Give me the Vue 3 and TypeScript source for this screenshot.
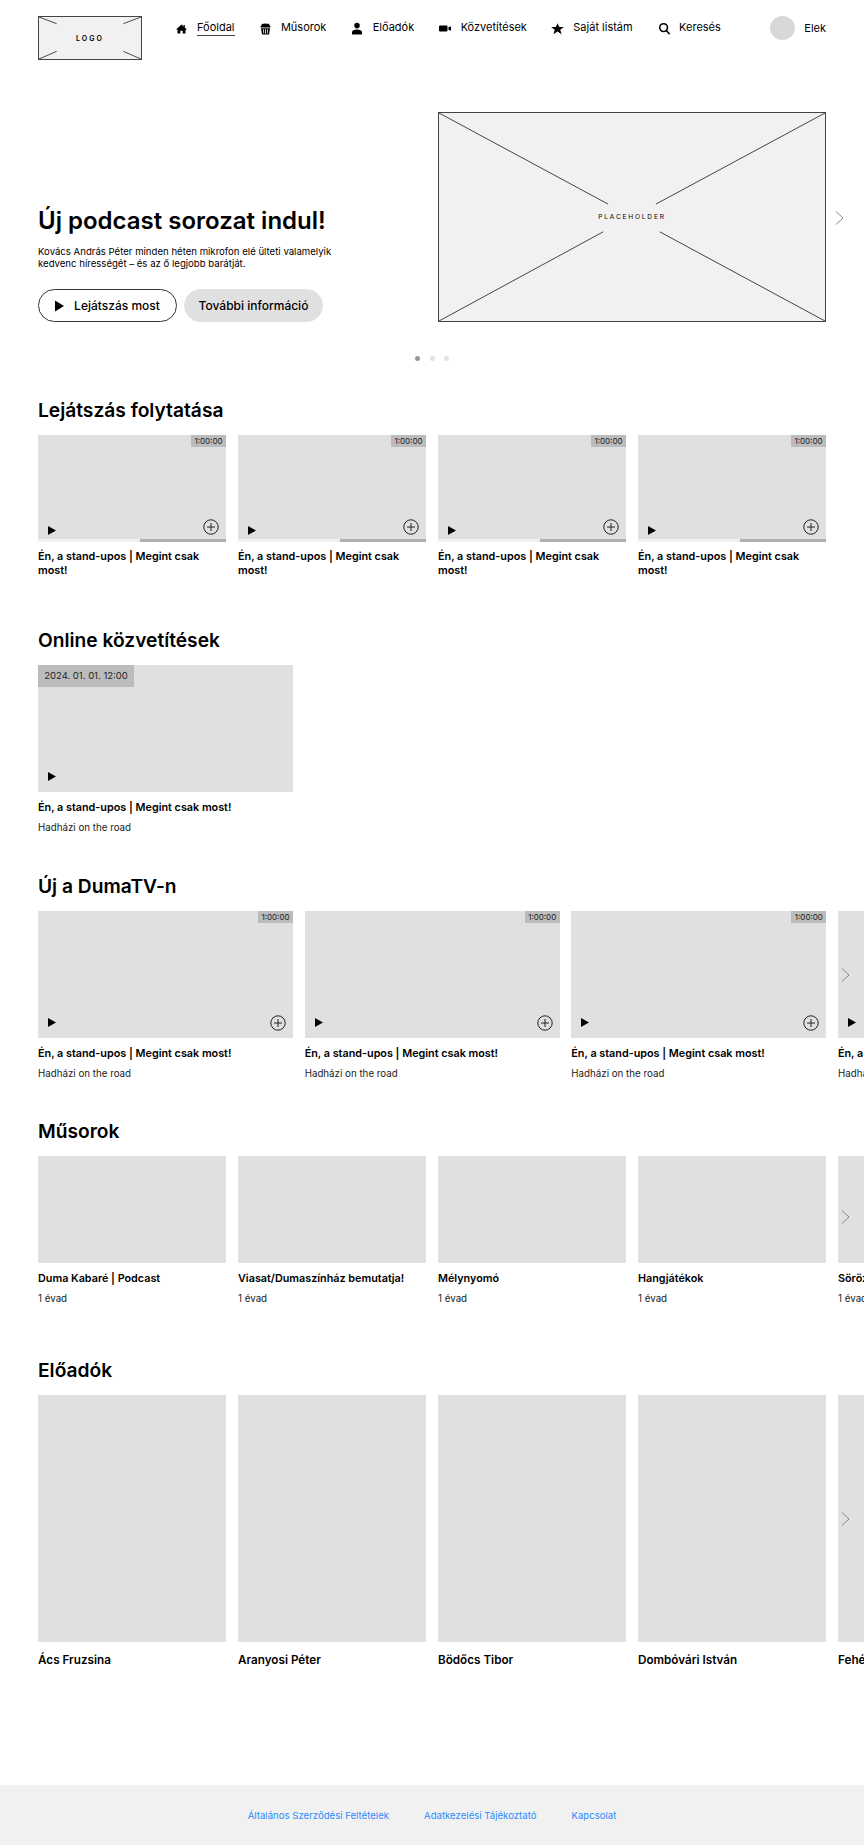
<script setup lang="ts">
interface Card {
  title: string
  sub?: string
}

const navItems = [
  { label: 'Főoldal', icon: 'home', active: true },
  { label: 'Műsorok', icon: 'popcorn' },
  { label: 'Előadók', icon: 'person' },
  { label: 'Közvetítések', icon: 'video' },
  { label: 'Saját listám', icon: 'star' },
  { label: 'Keresés', icon: 'search' }
]

const episodeTitle = 'Én, a stand-upos | Megint csak most!'
const showName = 'Hadházi on the road'

const continueCards: Card[] = [1, 2, 3, 4].map(() => ({ title: episodeTitle }))
const newCards: Card[] = [1, 2, 3, 4].map(() => ({ title: episodeTitle, sub: showName }))

const shows: Card[] = [
  { title: 'Duma Kabaré | Podcast', sub: '1 évad' },
  { title: 'Viasat/Dumaszínház bemutatja!', sub: '1 évad' },
  { title: 'Mélynyomó', sub: '1 évad' },
  { title: 'Hangjátékok', sub: '1 évad' },
  { title: 'Sörözés', sub: '1 évad' }
]

const artists = ['Ács Fruzsina', 'Aranyosi Péter', 'Bödőcs Tibor', 'Dombóvári István', 'Fehér Győző']
const footerLinks = ['Általános Szerződési Feltételek', 'Adatkezelési Tájékoztató', 'Kapcsolat']
</script>

<template>
  <div class="page">
    <header class="header">
      <div class="logo">
        <svg class="cross" viewBox="0 0 104 44" preserveAspectRatio="none">
          <path d="M0 0L18 7M104 0L86 7M0 44L18 36M104 44L86 36" />
        </svg>
        <span>LOGO</span>
      </div>
      <nav class="nav">
        <a v-for="item in navItems" :key="item.label" class="nav-item">
          <svg class="nav-icon" viewBox="0 0 14 14">
            <path v-if="item.icon === 'home'" d="M7.5 2.5L2 7.5H3.5V11.5H6.3V8.8H8.7V11.5H11.5V7.5H13L10.8 5.5V3H9.6V4.4Z" />
            <g v-else-if="item.icon === 'popcorn'">
              <path d="M3.6 3.2C3.4 2.2 4.4 1.5 5.4 1.9C6 1.2 9 1.2 9.6 1.9C10.6 1.5 11.6 2.2 11.4 3.2C12.4 3.6 12.8 4.6 12.4 5.4H2.6C2.2 4.6 2.6 3.6 3.6 3.2Z" />
              <path d="M3 6.2H12L11 12.5H4ZM5 7.2L5.5 11.6H6.2L5.8 7.2ZM7.1 7.2V11.6H7.9V7.2ZM9.2 7.2L8.8 11.6H9.5L10 7.2Z" fill-rule="evenodd" />
            </g>
            <path v-else-if="item.icon === 'person'" d="M7 .8A2.8 2.8 0 1 1 7 6.4A2.8 2.8 0 1 1 7 .8ZM2 12.5V10.2C2 8.4 4 7.4 7 7.4C10 7.4 12 8.4 12 10.2V12.5Z" />
            <path v-else-if="item.icon === 'video'" d="M2 3.5H8.5A1 1 0 0 1 9.5 4.5V8.5A1 1 0 0 1 8.5 9.5H2A1 1 0 0 1 1 8.5V4.5A1 1 0 0 1 2 3.5ZM10.4 5.3L13 4.3V8.7L10.4 7.7Z" />
            <path v-else-if="item.icon === 'star'" d="M7.5 1.2L9.2 5H13.9L10.2 7.7L11.6 12.2L7.5 9.5L3.4 12.2L4.8 7.7L1.1 5H5.8Z" />
            <g v-else class="stroked">
              <circle cx="7.6" cy="5.6" r="3.9" />
              <path d="M10.4 8.4L13.6 12.2" />
            </g>
          </svg>
          <span class="nav-label" :class="{ active: item.active }">{{ item.label }}</span>
        </a>
      </nav>
      <div class="user">
        <span class="avatar"></span>
        <span class="user-name">Elek</span>
      </div>
    </header>

    <section class="hero">
      <div class="hero-text">
        <h1>Új podcast sorozat indul!</h1>
        <p>Kovács András Péter minden héten mikrofon elé ülteti valamelyik kedvenc hírességét – és az ő legjobb barátját.</p>
        <div class="hero-buttons">
          <button class="btn btn-outline">
            <svg class="btn-play" viewBox="0 0 10 12"><path d="M0 0L10 6L0 12Z" /></svg>
            Lejátszás most
          </button>
          <button class="btn btn-grey">További információ</button>
        </div>
      </div>
      <div class="hero-image">
        <svg class="cross" viewBox="0 0 388 210" preserveAspectRatio="none">
          <path d="M0 0L170 92M388 0L218 92M0 210L165 120M388 210L222 120" />
        </svg>
        <span>PLACEHOLDER</span>
      </div>
      <svg class="arrow arrow-hero" viewBox="0 0 9 14"><path d="M1 .5L8 7L1 13.5" /></svg>
    </section>

    <div class="dots">
      <span class="dot on"></span>
      <span class="dot"></span>
      <span class="dot"></span>
    </div>

    <section class="section s-continue">
      <h2>Lejátszás folytatása</h2>
      <div class="row">
        <div v-for="(card, i) in continueCards" :key="i" class="card card-sm">
          <div class="thumb thumb-continue">
            <span class="duration">1:00:00</span>
            <svg class="play" viewBox="0 0 8 9"><path d="M0 0L8 4.5L0 9Z" /></svg>
            <svg class="plus" viewBox="0 0 16 16"><circle cx="8" cy="8" r="7.2" /><path d="M8 4V12M4 8H12" /></svg>
            <span class="progress"></span>
          </div>
          <div class="card-title">{{ card.title }}</div>
        </div>
      </div>
    </section>

    <section class="section s-online">
      <h2>Online közvetítések</h2>
      <div class="row">
        <div class="card card-lg">
          <div class="thumb thumb-lg">
            <span class="date">2024. 01. 01. 12:00</span>
            <svg class="play play-low" viewBox="0 0 8 9"><path d="M0 0L8 4.5L0 9Z" /></svg>
          </div>
          <div class="card-title">{{ episodeTitle }}</div>
          <div class="card-sub">{{ showName }}</div>
        </div>
      </div>
    </section>

    <section class="section s-new">
      <h2>Új a DumaTV-n</h2>
      <div class="row row-lg">
        <div v-for="(card, i) in newCards" :key="i" class="card card-lg">
          <div class="thumb thumb-lg">
            <span class="duration">1:00:00</span>
            <svg class="play play-low" viewBox="0 0 8 9"><path d="M0 0L8 4.5L0 9Z" /></svg>
            <svg class="plus" viewBox="0 0 16 16"><circle cx="8" cy="8" r="7.2" /><path d="M8 4V12M4 8H12" /></svg>
          </div>
          <div class="card-title">{{ card.title }}</div>
          <div class="card-sub">{{ card.sub }}</div>
        </div>
        <svg class="arrow arrow-new" viewBox="0 0 9 14"><path d="M1 .5L8 7L1 13.5" /></svg>
      </div>
    </section>

    <section class="section s-shows">
      <h2>Műsorok</h2>
      <div class="row">
        <div v-for="show in shows" :key="show.title" class="card card-sm">
          <div class="thumb thumb-show"></div>
          <div class="card-title">{{ show.title }}</div>
          <div class="card-sub">{{ show.sub }}</div>
        </div>
        <svg class="arrow arrow-shows" viewBox="0 0 9 14"><path d="M1 .5L8 7L1 13.5" /></svg>
      </div>
    </section>

    <section class="section s-artists">
      <h2>Előadók</h2>
      <div class="row">
        <div v-for="name in artists" :key="name" class="card card-sm">
          <div class="thumb thumb-artist"></div>
          <div class="card-title artist-name">{{ name }}</div>
        </div>
        <svg class="arrow arrow-artists" viewBox="0 0 9 14"><path d="M1 .5L8 7L1 13.5" /></svg>
      </div>
    </section>

    <footer class="footer">
      <a v-for="link in footerLinks" :key="link">{{ link }}</a>
    </footer>
  </div>
</template>

<style>
html,
body {
  margin: 0;
  background: #fff;
}
</style>

<style scoped>
.page {
  width: 864px;
  height: 1845px;
  overflow: hidden;
  font-family: Inter, "Liberation Sans", sans-serif;
  color: #000;
}

.header {
  display: flex;
  align-items: flex-start;
  height: 112px;
  box-sizing: border-box;
  padding: 16px 38px 0;
}

.logo {
  position: relative;
  flex: none;
  width: 104px;
  height: 44px;
  box-sizing: border-box;
  display: flex;
  align-items: center;
  justify-content: center;
  background: #f1f1f1;
  border: 1px solid #444;
  font-size: 7px;
  font-weight: 600;
  letter-spacing: 2px;
}

.cross {
  position: absolute;
  inset: 0;
  width: 100%;
  height: 100%;
  fill: none;
  stroke: #444;
  stroke-width: 1;
}

.logo span,
.hero-image span {
  position: relative;
}

.nav {
  display: flex;
  gap: 23.4px;
  margin: 4px 0 0 32px;
}

.nav-item {
  display: flex;
  align-items: flex-start;
  gap: 9px;
  font-size: 11px;
  line-height: 14px;
}

.nav-icon {
  width: 14px;
  height: 14px;
  margin-top: 1.5px;
  fill: #000;
}

.stroked {
  fill: none;
  stroke: #000;
  stroke-width: 1.6;
}

.nav-label {
  padding-bottom: 1px;
  border-bottom: 1px solid transparent;
}

.nav-label.active {
  border-bottom-color: #444;
}

.user {
  display: flex;
  align-items: center;
  gap: 9px;
  margin-left: auto;
  font-size: 11px;
}

.avatar {
  width: 25px;
  height: 24px;
  border-radius: 50%;
  background: #d8d8d8;
}

.hero {
  position: relative;
  display: flex;
  justify-content: space-between;
  align-items: flex-end;
  padding: 0 38px;
}

.hero-text {
  width: 340px;
}

.hero-text h1 {
  margin: 0 0 10px;
  font-size: 24px;
  font-weight: 600;
  line-height: 30px;
}

.hero-text p {
  width: 300px;
  margin: 0 0 19px;
  font-size: 9.6px;
  line-height: 12px;
}

.hero-buttons {
  display: flex;
  gap: 7px;
}

.btn {
  display: flex;
  align-items: center;
  justify-content: center;
  gap: 10px;
  height: 33px;
  width: 139px;
  padding: 0;
  box-sizing: border-box;
  border-radius: 17px;
  border: 1px solid #333;
  background: #fff;
  color: #000;
  font-family: inherit;
  font-size: 12px;
  font-weight: 500;
}

.btn-grey {
  background: #e0e0e0;
  border-color: #e0e0e0;
}

.btn-play {
  width: 9px;
  height: 12px;
  fill: #000;
}

.hero-image {
  position: relative;
  width: 388px;
  height: 210px;
  box-sizing: border-box;
  display: flex;
  align-items: center;
  justify-content: center;
  background: #f1f1f1;
  border: 1px solid #444;
  font-size: 6.6px;
  letter-spacing: 1.8px;
}

.arrow {
  position: absolute;
  width: 9px;
  height: 14px;
  fill: none;
  stroke: #888;
  stroke-width: 1;
}

.arrow-hero {
  right: 20px;
  top: 99px;
}

.arrow-new {
  left: 803px;
  top: 57px;
}

.arrow-shows {
  left: 803px;
  top: 54px;
}

.arrow-artists {
  left: 803px;
  top: 117px;
}

.dots {
  display: flex;
  justify-content: center;
  gap: 9.5px;
  margin: 34px 0 37px;
}

.dot {
  width: 5px;
  height: 5px;
  border-radius: 50%;
  background: #e2e2e2;
}

.dot.on {
  background: #999;
}

.section {
  padding-left: 38px;
}

.section h2 {
  margin: 0 0 13px;
  font-size: 19.2px;
  font-weight: 600;
  line-height: 24px;
}

.s-continue {
  padding-bottom: 50px;
}

.s-online {
  padding-bottom: 39px;
}

.s-new {
  padding-bottom: 38px;
}

.s-shows {
  padding-bottom: 52px;
}

.s-artists {
  height: 427px;
  box-sizing: border-box;
}

.row {
  position: relative;
  display: flex;
  gap: 12px;
}

.row-lg {
  gap: 11.67px;
}

.card {
  flex: none;
}

.card-sm {
  width: 188px;
}

.card-lg {
  width: 255px;
}

.thumb {
  position: relative;
  background: #e0e0e0;
  margin-bottom: 9px;
}

.thumb-continue {
  height: 107px;
  margin-bottom: 8px;
}

.thumb-lg {
  height: 127px;
}

.thumb-show {
  height: 107px;
}

.thumb-artist {
  height: 247px;
  margin-bottom: 11px;
}

.duration {
  position: absolute;
  top: 0;
  right: 0;
  width: 35px;
  height: 12px;
  background: #bcbcbc;
  color: #222;
  font-size: 8px;
  line-height: 12px;
  text-align: center;
}

.date {
  position: absolute;
  top: 0;
  left: 0;
  width: 96px;
  height: 22px;
  background: #bcbcbc;
  color: #222;
  font-size: 9.5px;
  line-height: 22px;
  text-align: center;
}

.play {
  position: absolute;
  left: 10px;
  bottom: 7px;
  width: 8px;
  height: 9px;
  fill: #000;
}

.play-low {
  bottom: 11px;
}

.plus {
  position: absolute;
  right: 7px;
  bottom: 7px;
  width: 16px;
  height: 16px;
  fill: none;
  stroke: #222;
  stroke-width: 1;
}

.progress {
  position: absolute;
  left: 0;
  right: 0;
  bottom: 0;
  height: 3px;
  background: linear-gradient(to right, #f0f0f0 54%, #b0b0b0 54%);
}

.card-title {
  font-size: 10.8px;
  font-weight: 600;
  line-height: 14px;
}

.card-sub {
  margin-top: 6px;
  font-size: 9.75px;
  line-height: 14px;
  color: #222;
}

.artist-name {
  font-size: 11.7px;
}

.footer {
  display: flex;
  justify-content: center;
  align-items: center;
  gap: 35px;
  height: 60px;
  background: #f1f1f1;
  font-size: 9.6px;
  color: #2b8cff;
}
</style>
